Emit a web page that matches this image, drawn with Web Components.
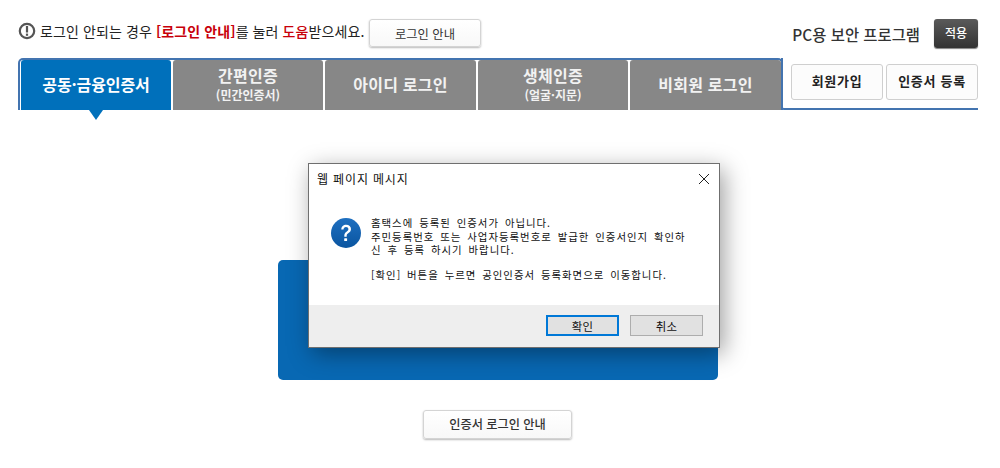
<!DOCTYPE html>
<html lang="ko"><head><meta charset="utf-8"><title>로그인</title>
<style>
html,body{margin:0;padding:0;background:#fff;font-family:"Noto Sans CJK KR","Noto Sans",sans-serif;color:#222}
body{width:1000px;height:468px;overflow:hidden;position:relative}
</style></head><body>
<login-page></login-page>
<message-dialog></message-dialog>
<script>
const F='"Noto Sans CJK KR","Noto Sans",sans-serif';
class SoftBtn extends HTMLElement{constructor(){super();this.attachShadow({mode:'open'}).innerHTML=`<style>
:host{display:flex;align-items:center;justify-content:center;box-sizing:border-box;background:linear-gradient(#fff,#f8f8f8);border:1px solid #d4d4d4;border-radius:3px;box-shadow:0 1px 2px rgba(0,0,0,.28);font-size:12.3px;color:#333;font-family:${F};white-space:nowrap}
:host([flat]){box-shadow:none;border-color:#cfcfcf;background:#fcfcfc;font-weight:700;font-size:13px;color:#222;letter-spacing:.7px;padding-bottom:3px}
</style><slot></slot>`}}
customElements.define('soft-btn',SoftBtn);
class TabItem extends HTMLElement{constructor(){super();this.attachShadow({mode:'open'}).innerHTML=`<style>
:host{display:flex;flex-direction:column;align-items:center;justify-content:center;box-sizing:border-box;height:50px;padding-bottom:2px;background:#878787;color:#f2f2f2;border-radius:3px 3px 0 0;font-family:${F};font-weight:700;font-size:16px;line-height:21px;letter-spacing:.25px;position:relative;white-space:nowrap}
:host([active]){background:#0070bb;color:#fff;letter-spacing:-.1px}
:host([active])::after{content:"";position:absolute;left:68px;top:50px;border-left:7px solid transparent;border-right:7px solid transparent;border-top:10px solid #0070bb}
::slotted(small){font-size:12px;line-height:17px;letter-spacing:0;font-weight:700}
</style><slot></slot>`}}
customElements.define('tab-item',TabItem);
class LoginPage extends HTMLElement{constructor(){super();this.attachShadow({mode:'open'}).innerHTML=`<style>
:host{display:block;width:1000px;height:468px;box-sizing:border-box;padding:19px 22px 0 18px;font-family:${F}}
.top{display:flex;align-items:flex-start;height:29px}
.ic{width:18px;height:18px;margin:3px 4px 0 0;flex:none}
.msg{font-size:14px;color:#222;letter-spacing:.1px;white-space:nowrap;width:329px;flex:none;line-height:24px}
.msg b{color:#c8000a}.msg b.n{font-weight:500}
.guide{width:112px;height:28px;padding-top:1px}
.sp{flex:1}
.pc{font-size:15.4px;color:#333;font-weight:500;margin-right:14px;white-space:nowrap;line-height:31px}
.apply{box-sizing:border-box;width:44px;height:29px;background:linear-gradient(#5a5a5a,#333);border-radius:3px;color:#fff;font-size:12px;font-weight:500;display:flex;align-items:center;justify-content:center;box-shadow:0 1px 1px rgba(0,0,0,.5);padding-bottom:2px}
.bar{display:flex;margin-top:10px;height:52px}
.tabs{box-sizing:border-box;width:765px;height:52px;flex:none;border:solid #4374b0;border-width:2px 2px 0 2px;border-radius:5px 5px 0 0;padding:0 0 0 1px;display:flex;gap:2px}
.tabs tab-item{width:150px}
.tabs tab-item:nth-child(3){width:151px}
.tabs tab-item:nth-child(5){width:151px}
.side{flex:1;border-bottom:2px solid #4374b0;display:flex;gap:3px;padding:6px 0 0 8px;height:44px;border-bottom-left-radius:3px;margin-left:-2px;border-left:2px solid #4374b0}
.side soft-btn{width:92px;height:36px}
.panel{display:block;margin:150px 0 0 260px;width:440px;height:120px;background:#0868b3;border-radius:5px}
.more{margin:30px 0 0 405px;width:149px;height:29px;font-size:12.2px;font-weight:500;color:#333;padding-bottom:2px}
</style>
<div class="top">
<svg class="ic" viewBox="0 0 18 18"><circle cx="9" cy="9" r="7.2" fill="none" stroke="#555" stroke-width="2.2"/><rect x="7.9" y="4" width="2.2" height="6.5" fill="#555"/><rect x="7.9" y="11.6" width="2.2" height="2.2" fill="#555"/></svg>
<div class="msg">로그인 안되는 경우 <b>[로그인 안내]</b>를 눌러 <b class="n">도움</b>받으세요.</div>
<soft-btn class="guide">로그인 안내</soft-btn><div class="sp"></div>
<div class="pc">PC용 보안 프로그램</div><div class="apply">적용</div></div>
<div class="bar"><div class="tabs">
<tab-item active>공동·금융인증서</tab-item>
<tab-item>간편인증<small>(민간인증서)</small></tab-item>
<tab-item>아이디 로그인</tab-item>
<tab-item>생체인증<small>(얼굴·지문)</small></tab-item>
<tab-item>비회원 로그인</tab-item></div>
<div class="side"><soft-btn flat>회원가입</soft-btn><soft-btn flat>인증서 등록</soft-btn></div></div>
<div class="panel"></div>
<soft-btn class="more">인증서 로그인 안내</soft-btn>`}}
customElements.define('login-page',LoginPage);
class MessageDialog extends HTMLElement{constructor(){super();this.attachShadow({mode:'open'}).innerHTML=`<style>
:host{position:absolute;left:308px;top:163px;width:412px;height:185px;box-sizing:border-box;background:#fff;border:1px solid #6f6f6f;box-shadow:4px 6px 22px rgba(0,0,0,.38);display:flex;flex-direction:column;font-family:${F};color:#111}
.title{display:flex;align-items:center;justify-content:space-between;height:29px;padding:0 9px 0 8px;font-size:12px;letter-spacing:.85px}
.body{flex:1;display:flex;padding:24px 0 0 22px;gap:10px}
.q{flex:none;margin-top:1px}
.txt{font-size:10.4px;line-height:13.5px;letter-spacing:1px;word-spacing:2px;white-space:nowrap;margin-top:-1px}
.txt p{margin:0}
.txt p.g{height:11.5px}
.foot{height:42px;background:#eee;display:flex;justify-content:flex-end;gap:11px;padding:10px 16px 0 0;box-sizing:border-box}
.b{box-sizing:border-box;width:73px;height:21px;background:#e1e1e1;border:1px solid #adadad;font-size:11.4px;display:flex;align-items:center;justify-content:center;letter-spacing:.3px}
.b.d{border:2px solid #0078d7}
</style>
<div class="title"><span>웹 페이지 메시지</span><svg width="12" height="12" viewBox="0 0 12 12"><path d="M1 1L11 11M11 1L1 11" stroke="#222" stroke-width="1" fill="none"/></svg></div>
<div class="body"><svg class="q" width="30" height="30" viewBox="0 0 30 30"><defs><linearGradient id="g" x1="0" y1="0" x2="0" y2="1"><stop offset="0" stop-color="#1e6fc0"/><stop offset="1" stop-color="#0a55a0"/></linearGradient></defs><circle cx="15" cy="15" r="15" fill="url(#g)"/><path d="M10.3 11.6c0-3 2.1-4.9 4.9-4.9s4.8 1.7 4.8 4.3c0 2-1 3.1-2.5 4.1-1.4.9-1.8 1.5-1.8 3v.6h-2.4v-.9c0-2 .7-3 2.2-4 1.3-.9 1.9-1.5 1.9-2.7 0-1.3-1-2.2-2.4-2.2-1.5 0-2.4 1-2.5 2.7z" fill="#fff"/><rect x="13.2" y="20.2" width="2.9" height="2.9" rx=".6" fill="#fff"/></svg>
<div class="txt"><p>홈택스에 등록된 인증서가 아닙니다.</p><p>주민등록번호 또는 사업자등록번호로 발급한 인증서인지 확인하</p><p>신 후 등록 하시기 바랍니다.</p><p class="g"></p><p>[확인] 버튼을 누르면 공인인증서 등록화면으로 이동합니다.</p></div></div>
<div class="foot"><div class="b d">확인</div><div class="b">취소</div></div>`}}
customElements.define('message-dialog',MessageDialog);
</script></body></html>
